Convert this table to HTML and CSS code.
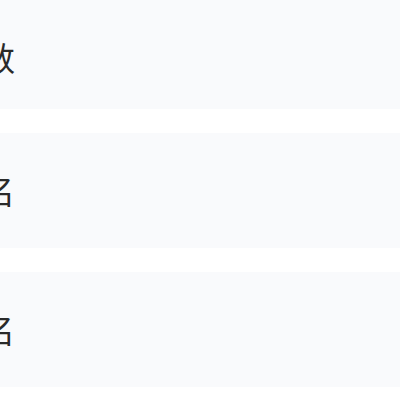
FILE: index.html
```html
<!DOCTYPE html>
<html lang="zh">
<head>
<meta charset="utf-8">
<link rel="stylesheet" href="styles.css">
</head>
<body>
<div class="list">
  <div class="row row-first"><span class="label">数</span></div>
  <div class="row"><span class="label">名</span></div>
  <div class="row"><span class="label">名</span></div>
</div>
</body>
</html>
```
FILE: styles.css
```css
html, body {
  margin: 0;
  padding: 0;
  background: #ffffff;
}
body {
  width: 400px;
  height: 400px;
  overflow: hidden;
  font-family: "Noto Sans CJK SC", "Noto Sans", sans-serif;
}
.list {
  display: flex;
  flex-direction: column;
  gap: 24px;
  margin-top: -6px;
}
.row {
  height: 115px;
  background: #f9fafc;
  display: flex;
  align-items: center;
}
.row-first {
  padding-top: 11px;
  height: 104px;
}
.label {
  margin-left: -18px;
  font-size: 33px;
  line-height: 1;
  color: #2a2a2a;
}
```
